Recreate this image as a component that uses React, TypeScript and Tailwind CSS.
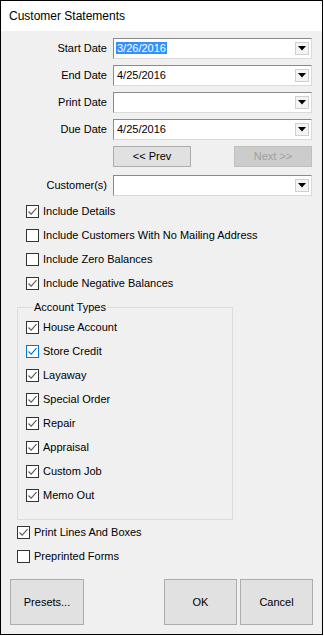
import React from "react";

const font = { fontFamily: '"Liberation Sans", Arial, sans-serif' };

function Check({ checked, blue }: { checked?: boolean; blue?: boolean }) {
  return (
    <span
      className={`flex h-[13px] w-[13px] shrink-0 items-center justify-center border bg-white ${
        blue ? "border-[#0078d7]" : "border-[#333333]"
      }`}
    >
      {checked && (
        <svg width="11" height="11" viewBox="0 0 11 11">
          <path
            d="M1.5 5.5 L4.2 8.2 L9.5 2.2"
            stroke={blue ? "#0078d7" : "#5a5a5a"}
            strokeWidth="1.1"
            fill="none"
          />
        </svg>
      )}
    </span>
  );
}

function CheckRow({
  label,
  checked,
  blue,
  className = "",
}: {
  label: string;
  checked?: boolean;
  blue?: boolean;
  className?: string;
}) {
  return (
    <div className={`flex h-[24px] items-center gap-[4px] ${className}`}>
      <Check checked={checked} blue={blue} />
      <span className="text-[11px] leading-none text-black">{label}</span>
    </div>
  );
}

function Combo({ value, selected }: { value?: string; selected?: boolean }) {
  return (
    <div className="flex h-[21px] items-center border border-t-[#8a8a8a] border-l-[#8a8a8a] border-r-[#dadada] border-b-[#dadada] bg-white pl-[2px] pr-[2px]">
      <div className="flex-1 text-[11px] leading-none">
        {value && (
          <span
            className={
              selected ? "bg-[#3390ff] px-px text-white" : "px-px text-black"
            }
          >
            {value}
          </span>
        )}
      </div>
      <div className="flex h-[13px] w-[14px] items-center justify-center border border-[#d0d0d0] bg-[#f4f4f4]">
        <svg width="8" height="5" viewBox="0 0 8 5">
          <path d="M0 0 H8 L4 4.5 Z" fill="#000" />
        </svg>
      </div>
    </div>
  );
}

const rows = [
  { label: "Start Date", value: "3/26/2016", selected: true },
  { label: "End Date", value: "4/25/2016" },
  { label: "Print Date", value: "" },
  { label: "Due Date", value: "4/25/2016" },
];

const accountTypes = [
  { label: "House Account" },
  { label: "Store Credit", blue: true },
  { label: "Layaway" },
  { label: "Special Order" },
  { label: "Repair" },
  { label: "Appraisal" },
  { label: "Custom Job" },
  { label: "Memo Out" },
];

export default function App() {
  return (
    <div className="h-[636px] w-[324px] bg-white" style={font}>
      <div className="flex h-[635px] w-[323px] flex-col border border-black">
        <div className="flex h-[30px] items-center bg-white pl-[8px] text-[12px] text-black">
          Customer Statements
        </div>

        <div className="flex flex-1 flex-col bg-[#f0f0f0] pt-[7px]">
          <div className="grid grid-cols-[106px_1fr] gap-x-[6px] gap-y-[6px] pr-[10px]">
            {rows.map((r) => (
              <React.Fragment key={r.label}>
                <div className="flex h-[21px] items-center justify-end text-[11px] text-black">
                  {r.label}
                </div>
                <Combo value={r.value} selected={r.selected} />
              </React.Fragment>
            ))}
            <div />
            <div className="flex h-[21px] justify-between">
              <button
                type="button"
                className="w-[78px] border border-[#adadad] bg-[#e1e1e1] text-[11px] text-black"
              >
                &lt;&lt; Prev
              </button>
              <button
                type="button"
                className="w-[78px] border border-[#bfbfbf] bg-[#cccccc] text-[11px] text-[#a0a0a0]"
              >
                Next &gt;&gt;
              </button>
            </div>
            <div className="mt-[2px] flex h-[21px] items-center justify-end text-[11px] text-black">
              Customer(s)
            </div>
            <div className="mt-[2px]">
              <Combo />
            </div>
          </div>

          <div className="mt-[3px] flex flex-col pl-[25px]">
            <CheckRow label="Include Details" checked />
            <CheckRow label="Include Customers With No Mailing Address" />
            <CheckRow label="Include Zero Balances" />
            <CheckRow label="Include Negative Balances" checked />
          </div>

          <fieldset className="ml-[16px] mt-[5px] w-[216px] border border-[#dcdcdc] pb-[12px] pl-[8px]">
            <legend className="ml-[7px] px-[1px] text-[11px] leading-[15px] text-black">
              Account Types
            </legend>
            {accountTypes.map((a) => (
              <CheckRow key={a.label} label={a.label} checked blue={a.blue} />
            ))}
          </fieldset>

          <div className="flex flex-col pl-[16px]">
            <CheckRow label="Print Lines And Boxes" checked />
            <CheckRow label="Preprinted Forms" />
          </div>

          <div className="mt-[11px] flex justify-between pl-[9px] pr-[9px]">
            <button
              type="button"
              className="h-[46px] w-[74px] border border-[#adadad] bg-[#e1e1e1] text-[11px] text-black"
            >
              Presets...
            </button>
            <div className="flex gap-[3px]">
              <button
                type="button"
                className="h-[46px] w-[73px] border border-[#adadad] bg-[#e1e1e1] text-[11px] text-black"
              >
                OK
              </button>
              <button
                type="button"
                className="h-[46px] w-[73px] border border-[#adadad] bg-[#e1e1e1] text-[11px] text-black"
              >
                Cancel
              </button>
            </div>
          </div>
        </div>
      </div>
    </div>
  );
}
